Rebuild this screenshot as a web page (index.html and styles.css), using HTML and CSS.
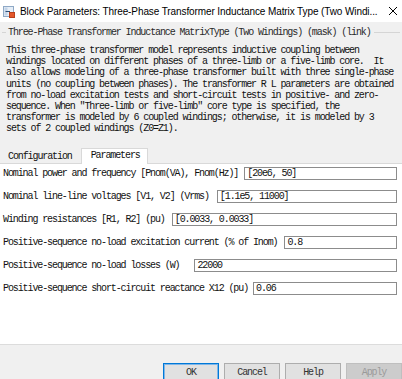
FILE: index.html
```html
<!DOCTYPE html>
<html lang="en">
<head>
<meta charset="utf-8">
<title>Block Parameters</title>
<link rel="stylesheet" href="styles.css">
</head>
<body>
<div class="window">
  <div class="titlebar">
    <svg class="appicon" viewBox="0 0 12 12" width="12" height="12">
      <rect x="0.5" y="0.5" width="10" height="10" fill="#e6eef7" stroke="#8fa9c6"/>
      <rect x="1.5" y="1.5" width="3" height="8" fill="#c3d4e8"/>
      <path d="M2.5 5.5h4.5" stroke="#2f4f75" stroke-width="1"/>
      <rect x="6.5" y="6.5" width="5" height="5" fill="#e4572b" stroke="#b8401c"/>
    </svg>
    <span class="title">Block Parameters: Three-Phase Transformer Inductance Matrix Type (Two Windi...</span>
    <svg class="close" viewBox="0 0 10 10" width="10" height="10">
      <path d="M1 1L9 9M9 1L1 9" stroke="#000" stroke-width="1"/>
    </svg>
  </div>
  <div class="body">
    <div class="group">
      <div class="legend"><span class="rule short"></span><span class="legend-text">Three-Phase Transformer Inductance MatrixType (Two Windings) (mask) (link)</span><span class="rule"></span></div>
      <p class="desc">This three-phase transformer model represents inductive coupling between<br>windings located on different phases of a three-limb or a five-limb core.  It<br>also allows modeling of a three-phase transformer built with three single-phase<br>units (no coupling between phases). The transformer R L parameters are obtained<br>from no-load excitation tests and short-circuit tests in positive- and zero-<br>sequence. When "Three-limb or five-limb" core type is specified, the<br>transformer is modeled by 6 coupled windings; otherwise, it is modeled by 3<br>sets of 2 coupled windings (Z0=Z1).</p>
    </div>
    <div class="tabs">
      <div class="tab">Configuration</div>
      <div class="tab active">Parameters</div>
    </div>
    <div class="panel">
      <div class="row g6"><span class="label">Nominal power and frequency [Pnom(VA), Fnom(Hz)]</span><input class="field" type="text" value="[20e6, 50]"></div>
      <div class="row g8"><span class="label">Nominal line-line voltages [V1, V2] (Vrms)</span><input class="field" type="text" value="[1.1e5, 11000]"></div>
      <div class="row"><span class="label">Winding resistances [R1, R2] (pu)</span><input class="field" type="text" value="[0.0033, 0.0033]"></div>
      <div class="row"><span class="label">Positive-sequence no-load excitation current (% of Inom)</span><input class="field" type="text" value="0.8"></div>
      <div class="row g15"><span class="label">Positive-sequence no-load losses (W)</span><input class="field" type="text" value="22000"></div>
      <div class="row g5"><span class="label">Positive-sequence short-circuit reactance X12 (pu)</span><input class="field" type="text" value="0.06"></div>
    </div>
    <div class="footer">
      <button class="btn default" type="button">OK</button>
      <button class="btn" type="button">Cancel</button>
      <button class="btn" type="button">Help</button>
      <button class="btn disabled" type="button">Apply</button>
    </div>
  </div>
</div>
</body>
</html>
```

FILE: styles.css
```css
html, body {
  margin: 0;
  padding: 0;
  background: #f0f0f0;
}

.window {
  width: 402px;
  height: 379px;
  overflow: hidden;
  display: flex;
  flex-direction: column;
}

.titlebar {
  flex: none;
  height: 22px;
  background: #ffffff;
  display: flex;
  align-items: center;
  padding-left: 3px;
}

.appicon {
  flex: none;
  margin-right: 5px;
  margin-top: 2px;
}

.title {
  flex: 1;
  font-family: "Liberation Sans", Arial, sans-serif;
  font-size: 10px;
  letter-spacing: -0.1px;
  color: #000;
  white-space: nowrap;
  overflow: hidden;
}

.close {
  flex: none;
  margin-right: 4px;
}

.body {
  flex: 1;
  display: flex;
  flex-direction: column;
  font-family: "Liberation Mono", "Courier New", monospace;
  font-size: 10px;
  letter-spacing: -1.1px;
  color: #000;
  min-height: 0;
}

.group {
  flex: none;
  margin: 5px 2px 0;
}

.legend {
  display: flex;
  align-items: center;
  height: 11px;
  line-height: 11px;
  white-space: pre;
}

.legend-text {
  color: #2a2a2a;
  margin-right: 3px;
}

.rule {
  flex: 1;
  height: 1px;
  background: #d5d5d5;
}

.rule.short {
  flex: none;
  width: 4px;
  margin-right: 2px;
}

.desc {
  margin: 7px 0 0 4px;
  line-height: 11.2px;
  white-space: pre;
  color: #111;
}

.tabs {
  flex: none;
  position: relative;
  z-index: 1;
  display: flex;
  align-items: flex-end;
  height: 15px;
  margin-top: 13.4px;
  padding-left: 1px;
}

.tab {
  box-sizing: border-box;
  height: 13px;
  line-height: 12px;
  padding: 0 6px;
  border: 1px solid transparent;
  border-bottom: none;
  color: #111;
  white-space: nowrap;
}

.tab.active {
  height: 16px;
  line-height: 14px;
  margin-left: 2px;
  margin-bottom: -1px;
  padding: 0 7px 0 9px;
  background: #ffffff;
  border-color: #d9d9d9;
}

.panel {
  flex: 1;
  background: #ffffff;
  border-top: 1px solid #d9d9d9;
  padding: 3px 5px 0 3px;
}

.row {
  display: flex;
  align-items: center;
  height: 13px;
  margin-bottom: 10px;
  gap: 7px;
}

.row.g5 { gap: 5px; }
.row.g6 { gap: 6px; }
.row.g8 { gap: 8px; }
.row.g15 { gap: 15px; }

.label {
  white-space: pre;
  flex: none;
  color: #111;
}

.field {
  flex: 1;
  min-width: 0;
  box-sizing: border-box;
  height: 13px;
  margin: 0;
  padding: 0 2px;
  border: 1px solid #8c8c8c;
  border-radius: 0;
  background: #fff;
  font: inherit;
  letter-spacing: inherit;
  color: #111;
  outline: none;
}

.footer {
  flex: none;
  box-sizing: border-box;
  height: 35px;
  border-top: 1px solid #dcdcdc;
  background: #f0f0f0;
  display: flex;
  justify-content: flex-end;
  align-items: flex-start;
  gap: 5px;
  padding-top: 18px;
}

.btn {
  flex: none;
  box-sizing: border-box;
  width: 56px;
  height: 19px;
  margin: 0;
  padding: 0;
  border: 1px solid #adadad;
  border-radius: 0;
  background: #e1e1e1;
  font: inherit;
  letter-spacing: inherit;
  color: #333;
  line-height: 16px;
}

.btn.default {
  border-color: #0078d7;
  box-shadow: inset 0 0 0 1px #7fb6e8;
}

.btn.disabled {
  background: #cccccc;
  border-color: #bfbfbf;
  color: #9a9a9a;
}
```
